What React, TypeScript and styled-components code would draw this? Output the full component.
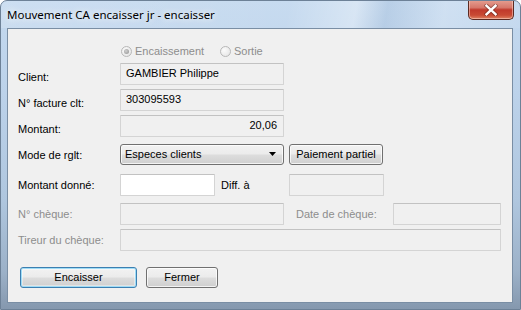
import React from "react";
import styled, { createGlobalStyle, css } from "styled-components";

const GlobalStyle = createGlobalStyle`
  html, body {
    margin: 0;
    padding: 0;
    background: #ffffff;
  }
  body {
    font-family: "Liberation Sans", Arial, sans-serif;
    font-size: 11px;
  }
`;

const Window = styled.div`
  width: 521px;
  height: 310px;
  box-sizing: border-box;
  display: flex;
  flex-direction: column;
  border: 1px solid #6d8197;
  border-radius: 7px 7px 0 0;
  background: linear-gradient(
    180deg,
    #c4d9ef 0%,
    #bcd2ea 30%,
    #afc6de 65%,
    #9cb1c8 88%,
    #8598ae 100%
  );
  overflow: hidden;
`;

const TitleBar = styled.div`
  height: 27px;
  display: flex;
  align-items: flex-start;
  background: linear-gradient(
    100deg,
    rgba(255, 255, 255, 0.15) 0%,
    rgba(255, 255, 255, 0.05) 55%,
    rgba(255, 255, 255, 0.35) 68%,
    rgba(120, 150, 185, 0.15) 74%,
    rgba(255, 255, 255, 0.2) 85%,
    rgba(255, 255, 255, 0.05) 100%
  );
`;

const Title = styled.span`
  padding: 6px 0 0 6px;
  color: #000;
  font-family: "Noto Sans", "Segoe UI", sans-serif;
  font-size: 11.5px;
  line-height: 16px;
  text-shadow: 0 0 6px rgba(255, 255, 255, 0.9), 0 0 10px rgba(255, 255, 255, 0.7);
`;

const CloseButton = styled.div`
  margin-left: auto;
  margin-right: 6px;
  margin-top: -1px;
  width: 46px;
  height: 20px;
  box-sizing: border-box;
  border: 1px solid #5b2a22;
  border-top: none;
  border-radius: 0 0 5px 5px;
  background: linear-gradient(
    180deg,
    #e6a092 0%,
    #d6776a 40%,
    #c0392b 52%,
    #c94a34 80%,
    #de8262 100%
  );
  box-shadow: inset 0 0 0 1px rgba(255, 220, 210, 0.5);
  display: flex;
  align-items: center;
  justify-content: center;
`;

const Client = styled.div`
  flex: 1;
  margin: 0 7px 6px 6px;
  border: 1px solid #7a8ea4;
  background: #f0f0f0;
  padding: 15px 0 0 10px;
  display: flex;
  flex-direction: column;
`;

const Row = styled.div<{ $top: number; $h?: number }>`
  display: flex;
  align-items: center;
  height: ${(p) => p.$h ?? 22}px;
  margin-top: ${(p) => p.$top}px;
`;

// $dy: labels of the first rows sit a few pixels lower than their field text
const Label = styled.span<{ $w?: number; $disabled?: boolean; $ml?: number; $dy?: number }>`
  width: ${(p) => p.$w ?? 102}px;
  margin-left: ${(p) => p.$ml ?? 0}px;
  padding-top: ${(p) => p.$dy ?? 0}px;
  flex-shrink: 0;
  color: ${(p) => (p.$disabled ? "#8d8d8d" : "#000")};
  white-space: nowrap;
`;

const Field = styled.div<{ $w: number; $ml?: number; $white?: boolean; $right?: boolean }>`
  width: ${(p) => p.$w}px;
  height: 22px;
  margin-left: ${(p) => p.$ml ?? 0}px;
  box-sizing: border-box;
  flex-shrink: 0;
  border: 1px solid #d4d4d4;
  border-top-color: #c2c2c2;
  border-radius: 1px;
  background: ${(p) => (p.$white ? "#ffffff" : "#f0f0f0")};
  display: flex;
  align-items: center;
  justify-content: ${(p) => (p.$right ? "flex-end" : "flex-start")};
  padding: 0 6px 2px 5px;
  color: #000;
  white-space: nowrap;
`;

const buttonFace = css`
  box-sizing: border-box;
  border: 1px solid #707070;
  border-radius: 3px;
  background: linear-gradient(180deg, #f2f2f2 0%, #ebebeb 49%, #dddddd 51%, #cfcfcf 100%);
  box-shadow: inset 0 0 0 1px rgba(255, 255, 255, 0.75);
  color: #000;
  font-family: inherit;
  font-size: 11px;
  white-space: nowrap;
`;

const Combo = styled.div<{ $w: number }>`
  ${buttonFace};
  width: ${(p) => p.$w}px;
  height: 21px;
  display: flex;
  align-items: center;
  padding: 0 7px 1px 4px;
  flex-shrink: 0;
`;

const ComboText = styled.span`
  flex: 1;
`;

const Button = styled.button<{ $w: number; $ml?: number; $h?: number; $default?: boolean }>`
  ${buttonFace};
  width: ${(p) => p.$w}px;
  height: ${(p) => p.$h ?? 21}px;
  margin: 0 0 0 ${(p) => p.$ml ?? 0}px;
  padding: 0 0 1px;
  flex-shrink: 0;
  line-height: 16px;
  ${(p) =>
    p.$default &&
    css`
      border-color: #3c7fb1;
      box-shadow: inset 0 0 0 1px #9fdcf6, inset 0 0 0 2px rgba(255, 255, 255, 0.4);
    `}
`;

const RadioGroup = styled.div`
  display: flex;
  align-items: center;
  padding-left: 103px;
`;

const RadioItem = styled.span<{ $w?: number }>`
  display: flex;
  align-items: center;
  color: #8d8d8d;
  ${(p) => p.$w && `width: ${p.$w}px;`}
`;

const RadioCircle = styled.span<{ $checked?: boolean }>`
  position: relative;
  width: 11px;
  height: 11px;
  box-sizing: border-box;
  border-radius: 50%;
  border: 1px solid #b8b8b8;
  background: radial-gradient(circle at 35% 35%, #fbfbfb, #e2e2e2);
  margin-right: 3px;
  flex-shrink: 0;
  ${(p) =>
    p.$checked &&
    css`
      &::after {
        content: "";
        position: absolute;
        left: 2px;
        top: 2px;
        width: 5px;
        height: 5px;
        border-radius: 50%;
        background: radial-gradient(circle at 40% 40%, #d0d0d0, #8f8f8f);
      }
    `}
`;

const ButtonRow = styled.div`
  display: flex;
  align-items: center;
  margin-top: 16px;
  padding-left: 2px;
`;

const CloseGlyph = () => (
  <svg width="14" height="12" viewBox="0 0 14 12">
    <path
      d="M2.5 1.8 L11.5 10.2 M11.5 1.8 L2.5 10.2"
      stroke="#4a1a12"
      strokeWidth="4.2"
      strokeLinecap="square"
      fill="none"
      opacity="0.45"
    />
    <path
      d="M2.5 1.8 L11.5 10.2 M11.5 1.8 L2.5 10.2"
      stroke="#ffffff"
      strokeWidth="2.4"
      strokeLinecap="square"
      fill="none"
    />
  </svg>
);

const Arrow = () => (
  <svg width="7" height="4" viewBox="0 0 7 4">
    <path d="M0 0 H7 L3.5 4 Z" fill="#000" />
  </svg>
);

export default function App() {
  return (
    <>
      <GlobalStyle />
      <Window>
        <TitleBar>
          <Title>Mouvement CA encaisser jr - encaisser</Title>
          <CloseButton>
            <CloseGlyph />
          </CloseButton>
        </TitleBar>
        <Client>
          <Row $top={0} $h={14}>
            <RadioGroup>
              <RadioItem $w={99}>
                <RadioCircle $checked />
                Encaissement
              </RadioItem>
              <RadioItem>
                <RadioCircle />
                Sortie
              </RadioItem>
            </RadioGroup>
          </Row>
          <Row $top={5}>
            <Label $dy={6}>Client:</Label>
            <Field $w={164}>GAMBIER Philippe</Field>
          </Row>
          <Row $top={4}>
            <Label $dy={5}>N° facture clt:</Label>
            <Field $w={164}>303095593</Field>
          </Row>
          <Row $top={4}>
            <Label $dy={5}>Montant:</Label>
            <Field $w={164} $right>
              20,06
            </Field>
          </Row>
          <Row $top={7} $h={21}>
            <Label>Mode de rglt:</Label>
            <Combo $w={164}>
              <ComboText>Especes clients</ComboText>
              <Arrow />
            </Combo>
            <Button $w={94} $ml={5}>
              Paiement partiel
            </Button>
          </Row>
          <Row $top={9}>
            <Label>Montant donné:</Label>
            <Field $w={95} $white />
            <Label $w={68} $ml={6}>
              Diff. à
            </Label>
            <Field $w={95} />
          </Row>
          <Row $top={7}>
            <Label $disabled>N° chèque:</Label>
            <Field $w={164} />
            <Label $disabled $w={97} $ml={12}>
              Date de chèque:
            </Label>
            <Field $w={108} />
          </Row>
          <Row $top={4}>
            <Label $disabled>Tireur du chèque:</Label>
            <Field $w={381} />
          </Row>
          <ButtonRow>
            <Button $w={117} $h={21} $default>
              Encaisser
            </Button>
            <Button $w={72} $h={21} $ml={9}>
              Fermer
            </Button>
          </ButtonRow>
        </Client>
      </Window>
    </>
  );
}
